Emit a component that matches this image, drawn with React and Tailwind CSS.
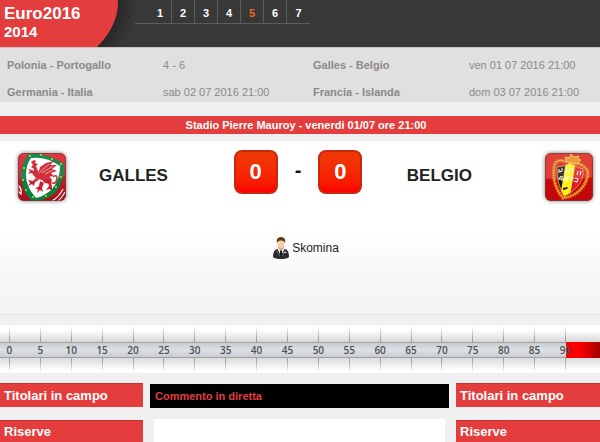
import { useState } from 'react'

const pages = [1, 2, 3, 4, 5, 6, 7]

const matches = [
  ['Polonia - Portogallo', '4 - 6', 'Galles - Belgio', 'ven 01 07 2016 21:00'],
  ['Germania - Italia', 'sab 02 07 2016 21:00', 'Francia - Islanda', 'dom 03 07 2016 21:00'],
]

const minutes = [0, 5, 10, 15, 20, 25, 30, 35, 40, 45, 50, 55, 60, 65, 70, 75, 80, 85, 90]

function WalesCrest() {
  return (
    <svg viewBox="0 0 48 48" className="size-12 shrink-0 drop-shadow-[0_0_2px_#777]" role="img" aria-label="Galles">
      <defs>
        <clipPath id="wales-clip"><rect width="48" height="48" rx="6" /></clipPath>
        <linearGradient id="wales-bg" x1="0" y1="0" x2="0" y2="1">
          <stop offset="0" stopColor="#e02734" />
          <stop offset="0.55" stopColor="#cb1524" />
          <stop offset="1" stopColor="#a90d18" />
        </linearGradient>
      </defs>
      <g clipPath="url(#wales-clip)">
        <rect width="48" height="48" fill="url(#wales-bg)" />
        <path d="M11 1Q28-1 46 11Q47 28 38 39Q28 49 13 47Q3 37 3 22Q4 9 11 1Z" fill="#07813f" />
        <path d="M13 5Q28 3 42 13Q42 27 34 36Q27 43 18 45Q8 34 8 22Q8 12 13 5Z" fill="#fff" />
        <g fill="#cf1f2d">
          <path d="M13 9L16 7L18 8L17 10L20 11L18 13L20 18L24 21L31 23L34 27L32 31L27 30L24 27L19 26L15 22L16 16L13 14L15 12Z" />
          <path d="M20 21L22 14L28 10L36 8L32 12L39 12L34 16L39 18L33 20L36 23L29 24L24 22Z" />
          <path d="M17 22L13 20L10 21L12 18L10 16L14 17L18 19Z" />
          <path d="M18 25L15 28L10 27L12 30L10 33L14 31L16 33L17 29L21 27Z" />
          <path d="M22 28L21 33L17 36L20 36L19 40L22 37L25 39L24 35L26 30Z" />
          <path d="M30 29L31 33L28 37L32 36L34 38L34 33L32 28Z" />
        </g>
        <path d="M32 29Q38 33 39 25Q39 21 35 24" fill="none" stroke="#cf1f2d" strokeWidth="1.5" />
        <path d="M21 20L31 11M24 20L35 13M27 21L35 17" stroke="#fff" strokeWidth="0.8" opacity="0.7" />
        <g fill="#dbe52a">
          <circle cx="12" cy="3" r="0.9" /><circle cx="23" cy="2" r="0.9" /><circle cx="34" cy="6" r="0.9" />
          <circle cx="43" cy="11" r="0.9" /><circle cx="43" cy="24" r="0.9" /><circle cx="38" cy="34" r="0.9" />
          <circle cx="28" cy="43" r="0.9" /><circle cx="15" cy="44" r="0.9" /><circle cx="8" cy="37" r="0.9" />
          <circle cx="5" cy="27" r="0.9" /><circle cx="6" cy="15" r="0.9" />
        </g>
        <path d="M0 32q4 3 3 9l-3-3zM45 36q-4 8-11 12M47 39q-3 6-7 9" fill="none" stroke="#fff" strokeWidth="1.1" />
        <path d="M0 0h48v24Q24 29 0 26Z" fill="#fff" opacity="0.08" />
      </g>
      <rect x="0.5" y="0.5" width="47" height="47" rx="6" fill="none" stroke="#6e4040" opacity="0.7" />
    </svg>
  )
}

function BelgiumCrest() {
  return (
    <svg viewBox="0 0 48 48" className="size-12 shrink-0 drop-shadow-[0_0_2px_#777]" role="img" aria-label="Belgio">
      <defs>
        <clipPath id="belgium-clip"><rect width="48" height="48" rx="6" /></clipPath>
        <clipPath id="belgium-shield"><path d="M12 14Q19 14 25 10Q31 14 38 16Q39 27 31 35Q25 41 19 43Q12 32 12 14Z" /></clipPath>
        <linearGradient id="belgium-bg" x1="0" y1="0" x2="0" y2="1">
          <stop offset="0" stopColor="#d82218" />
          <stop offset="0.5" stopColor="#e31b12" />
          <stop offset="0.55" stopColor="#c9080a" />
          <stop offset="1" stopColor="#c00709" />
        </linearGradient>
      </defs>
      <g clipPath="url(#belgium-clip)">
        <rect width="48" height="48" fill="url(#belgium-bg)" />
        <path d="M22 9Q10 4 9 15Q7 32 18 45Q32 43 39 32Q47 18 38 13Q33 9 28 11" fill="none" stroke="#d9701a" strokeWidth="3.6" strokeDasharray="2 0.7" />
        <path d="M22 9Q10 4 9 15Q7 32 18 45Q32 43 39 32Q47 18 38 13Q33 9 28 11" fill="none" stroke="#f0bd3e" strokeWidth="1.3" strokeDasharray="1.5 0.7" />
        <path d="M22 9L20 4L24 5L26 1L29 4L34 3L33 6L36 7L32 11Z" fill="#e98b19" stroke="#f9d85b" strokeWidth="0.8" />
        <g clipPath="url(#belgium-shield)">
          <path d="M10 8h13l-6 36h-8z" fill="#171310" />
          <path d="M21 8h11l-6 36H15z" fill="#fff01c" />
          <path d="M31 8h9v35H25z" fill="#df192c" />
        </g>
        <path d="M12 14Q19 14 25 10Q31 14 38 16Q39 27 31 35Q25 41 19 43Q12 32 12 14Z" fill="none" stroke="#e7c15c" strokeWidth="0.7" />
        <path d="M14 16v3l3-1v-3M16 23l-2 3h3m0-3v5M33 18l-1 4m4-4-1 4M30 25l3 1-1 3-3-1" fill="none" stroke="#f6eee0" strokeWidth="1.1" />
        <path d="M22 15l-1 4h3l1-4M28 15l-1 4M20 25l3-1-1 4-2 0zM25 24l3 1-2 3" fill="none" stroke="#fffcc2" strokeWidth="1.2" />
        <path d="M18 35l5-1-1 2-4 1z" fill="#171310" />
        <path d="M0 0h48v24Q24 29 0 26Z" fill="#fff" opacity="0.14" />
      </g>
      <rect x="0.5" y="0.5" width="47" height="47" rx="6" fill="none" stroke="#6e4040" opacity="0.7" />
    </svg>
  )
}

function RefereeIcon() {
  return (
    <svg viewBox="0 0 16 22" className="h-[22px] w-4" aria-hidden="true">
      <path d="M0 20Q0 13 4 12L8 10L12 12Q16 13 16 20Q14 22 8 22Q2 22 0 20Z" fill="#2b2d33" />
      <path d="M4 11l4 8 4-8z" fill="#f4f4f2" />
      <path d="M7.3 13h1.5l.6 5-1.4 2-1.3-2z" fill="#15161a" />
      <path d="M5 9h6v2l-3 3-3-3z" fill="#dba980" />
      <ellipse cx="8" cy="6.5" rx="3.7" ry="4.8" fill="#f3cfab" />
      <path d="M3.8 6Q3 0 8 0Q13 0 12.2 6Q11 3 8 3.5Q5 3 3.8 6Z" fill="#5d3b12" />
      <path d="M3 13l4 6M13 13l-4 6" stroke="#656870" strokeWidth="0.9" />
      <path d="M10.5 15.500h3" stroke="#e6dac0" />
    </svg>
  )
}

function Score({ value }) {
  return (
    <div className="flex size-11 items-center justify-center rounded-lg border-2 border-[#c8280e] bg-linear-to-b from-[#ee3a06] to-[#fb0000] text-[22px] font-bold leading-6 text-white">
      {value}
    </div>
  )
}

function SideColumn() {
  return (
    <div>
      <h2 className="border-t border-[#c93030] bg-[#e33d3d] pl-1 text-[13px] font-bold leading-[23px] text-white">
        Titolari in campo
      </h2>
      <h2 className="mt-[13px] border-t border-[#c93030] bg-[#e33d3d] pl-1 text-[13px] font-bold leading-[21px] text-white">
        Riserve
      </h2>
    </div>
  )
}

export default function App() {
  const [page, setPage] = useState(5)

  return (
    <div className="flex min-h-screen flex-col bg-[#f0f0f0] font-['Liberation_Sans',Arial,sans-serif] text-[#222]">
      <header className="relative flex h-[47px] overflow-hidden bg-[#383838]">
        <svg viewBox="0 0 150 47" className="absolute left-0 top-0 h-[47px] w-[150px]" aria-hidden="true">
          <defs>
            <radialGradient id="badge-shadow" gradientUnits="userSpaceOnUse" cx="43" cy="-5" r="95">
              <stop offset="0.78" stopColor="#262626" />
              <stop offset="1" stopColor="#383838" />
            </radialGradient>
          </defs>
          <rect width="150" height="47" fill="url(#badge-shadow)" />
          <path d="M0 0H118Q119 25 97 47H0Z" fill="#e33d3d" />
        </svg>
        <h1 className="relative w-[135px] pl-1 pt-[5px] font-bold text-white">
          <span className="block text-[17px] leading-[18px]">Euro2016</span>
          <span className="block text-[15px] leading-[18px]">2014</span>
        </h1>
        <nav aria-label="Giornate" className="relative flex h-6 border-b border-[#5c5c5c] pl-[14px]">
          {pages.map((n) => (
            <button
              key={n}
              type="button"
              onClick={() => setPage(n)}
              className={`w-[23px] border-r border-[#5c5c5c] pt-1 text-[11px] font-bold last:border-r-0 ${n === page ? 'text-[#f26522]' : 'text-white'}`}
            >
              {n}
            </button>
          ))}
        </nav>
      </header>

      <div className="border-t border-[#c9c5c5] bg-[#e0e0e0]">
        <table className="w-full table-fixed text-left text-[11px] leading-[19px] text-[#8a8a8a]">
          <colgroup>
            <col className="w-[26%]" />
            <col className="w-[25%]" />
            <col className="w-[26%]" />
            <col className="w-[23%]" />
          </colgroup>
          <tbody>
            {matches.map((row) => (
              <tr key={row[0]}>
                {row.map((cell, i) => (
                  <td key={cell} className={`whitespace-nowrap p-0 pl-[7px] pt-2 ${i % 2 === 0 ? 'font-bold' : ''}`}>
                    {cell}
                  </td>
                ))}
              </tr>
            ))}
          </tbody>
        </table>
      </div>

      <p className="mt-[14px] bg-[#e33d3d] pl-3 text-center text-[11px] font-bold leading-[18px] text-white">
        Stadio Pierre Mauroy - venerdi 01/07 ore 21:00
      </p>

      <section className="mt-[7px] h-[174px] border-b border-[#e2e2e2] bg-linear-to-b from-white from-50% to-[#f2f2f2] pr-1">
        <div className="grid grid-cols-[1fr_auto_1fr] items-start pt-[9px]">
          <div className="flex items-center gap-[33px] pl-[18px] pt-[3px]">
            <WalesCrest />
            <h2 className="pb-0.5 text-[17px] font-bold leading-6">GALLES</h2>
          </div>
          <div className="flex items-center gap-[17px]">
            <Score value={0} />
            <span className="pb-1 text-xl font-bold leading-6 text-[#111]">-</span>
            <Score value={0} />
          </div>
          <div className="flex items-center justify-end gap-[73px] pr-[3px] pt-[3px]">
            <h2 className="pb-0.5 text-[17px] font-bold leading-6">BELGIO</h2>
            <BelgiumCrest />
          </div>
        </div>
        <p className="mt-9 flex items-center justify-center gap-[3px] pl-4 text-xs">
          <RefereeIcon />
          Skomina
        </p>
      </section>

      <section aria-label="Minuti" className="relative mt-[10px] flex h-12 flex-col overflow-hidden">
        <div className="h-[17px] bg-linear-to-b from-white from-30% to-[#d8d8d8]" />
        <div className="flex h-4 justify-end border-y border-[#a0a0a0] bg-linear-to-b from-[#c9cdd1] via-[#dce1e5] to-[#c9cdd1]">
          <div className="-my-px w-[5.7%] bg-linear-to-r from-[#ff0000] from-40% to-[#a00000]" />
        </div>
        <div className="h-[15px] bg-linear-to-b from-[#dcdcdc] to-white to-80%" />
        <ol className="absolute inset-0 -left-[6px] flex font-['Open_Sans',sans-serif] text-[10px] font-semibold leading-4 text-[#4c5054]">
          {minutes.map((minute) => (
            <li key={minute} className="flex w-[5.1%] shrink-0 flex-col items-center">
              <span className="h-[17px] w-px bg-linear-to-b from-transparent to-[#999]" />
              {minute}
              <span className="h-[15px] w-px bg-linear-to-b from-[#999] to-transparent" />
            </li>
          ))}
        </ol>
      </section>

      <div className="mt-[10px] grid flex-1 grid-cols-[143fr_299fr_144fr] gap-[7px]">
        <SideColumn />
        <main className="flex flex-col pt-px">
          <h2 className="bg-black pl-[5px] text-[11px] font-bold leading-6 text-[#e33d3d]">Commento in diretta</h2>
          <div className="mx-1 mt-[11px] flex-1 bg-white" />
        </main>
        <SideColumn />
      </div>
    </div>
  )
}
